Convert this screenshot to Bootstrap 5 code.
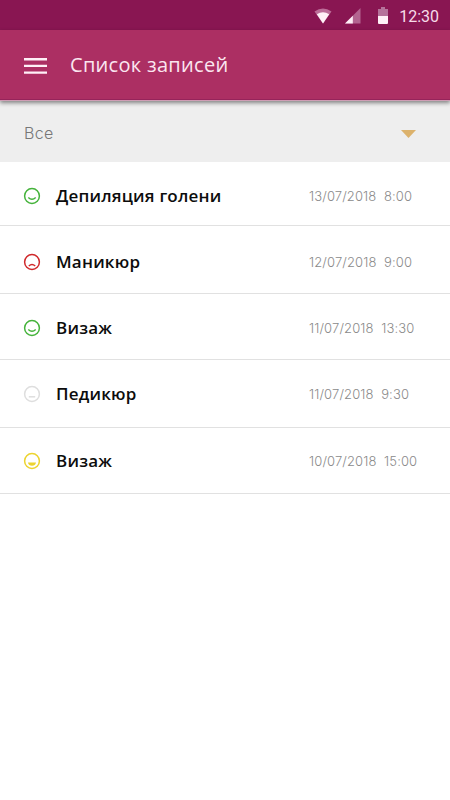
<!DOCTYPE html>
<html lang="ru">
<head>
<meta charset="utf-8">
<meta name="viewport" content="width=device-width, initial-scale=1">
<title>Список записей</title>
<link href="https://cdn.jsdelivr.net/npm/bootstrap@5.3.0/dist/css/bootstrap.min.css" rel="stylesheet">
<style>
body { font-family: "Open Sans", "Noto Sans", sans-serif; background: #fff; }
svg { display: block; flex: none; }
.screen { width: 450px; height: 800px; }
.statusbar { height: 30px; background: #891652; padding-right: 11px; }
.statusbar svg { margin-top: 1px; }
.signal { margin-left: 13px; }
.clock { font: 400 16px/30px Roboto, sans-serif; color: #f6dbe9; margin: 3px 0 0 10px; white-space: nowrap; }
.appbar { height: 71px; background: #ac2f63; border-bottom: 1px solid #cf9db4; box-shadow: inset 0 -1px #96245a, 0 2px 4px rgba(0,0,0,.45); padding: 0 24px; position: relative; }
.appbar svg { margin-top: 2px; }
.appbar h1 { font-size: 20px; line-height: 24px; font-weight: 500; letter-spacing: .3px; color: #fbe6f0; margin: -1px 0 0 23px; }
.filterbar { height: 61px; background: #eee; padding: 4px 34px 0 24px; color: #777; font-size: 16px; }
.filterbar span { font-family: Inter, sans-serif; font-weight: 300; letter-spacing: .3px; margin-top: -2px; }
.entry { border-bottom: 1px solid #e1e1e1; padding-left: 23px; height: 66px; }
.entry.first { height: 64px; padding-top: 4px; }
.entry.tall { height: 68px; padding-top: 4px; }
.entry.level { padding-top: 0; }
.entry.plain { padding-top: 2px; }
.title { font-size: 17px; font-weight: 600; color: #0c0c0c; margin-left: 15px; letter-spacing: .2px; white-space: nowrap; }
.date { width: 141px; font-family: Inter, sans-serif; font-size: 13px; font-weight: 300; letter-spacing: .12px; color: #8a8a8a; white-space: pre; padding-top: 3px; }
</style>
</head>
<body>
<main class="screen overflow-hidden">
  <div class="statusbar d-flex align-items-center justify-content-end">
    <svg width="18" height="16" viewBox="0 0 18 16"><path d="M.5 3.5Q9-2.5 17.5 3.5L9 15.5Z" fill="#bc6d98"/><path d="M2.8 6.3Q9 2.3 15.2 6.3L9 15.5Z" fill="#fff0f7"/></svg>
    <svg class="signal" width="16" height="16" viewBox="0 0 16 16"><path d="M15.5 0V15.5H0Z" fill="#b36490"/><path d="M7.8 7.7V15.5H0Z" fill="#fff0f7"/></svg>
    <svg width="12" height="18" viewBox="0 0 12 18" class="ms-3"><path d="M4 0H8V2H11V9H1V2H4Z" fill="#b5729a"/><path d="M1 9H11V16Q11 17 10 17H2Q1 17 1 16Z" fill="#fff0f7"/></svg>
    <span class="clock">12:30</span>
  </div>
  <header class="appbar d-flex align-items-center">
    <svg width="23" height="16" viewBox="0 0 23 16" fill="#fff0f7"><path d="M0 0H23V2.4H0ZM0 6.7H23V9.1H0ZM0 13.4H23V15.8H0Z"/></svg>
    <h1>Список записей</h1>
  </header>
  <div class="filterbar d-flex align-items-center justify-content-between">
    <span>Все</span>
    <svg width="15" height="8" viewBox="0 0 15 8"><path d="M0 0H15L7.5 8Z" fill="#dcb26c"/></svg>
  </div>
  <div>
    <div class="entry first d-flex align-items-center"><svg width="18" height="18" viewBox="0 0 18 18" fill="none" stroke="#45b33b" stroke-width="1.5"><circle cx="9" cy="9" r="7.4"/><path d="M5.3 10.5Q9 14 12.7 10.5"/></svg><span class="title">Депиляция голени</span><span class="date ms-auto">13/07/2018  8:00</span></div>
    <div class="entry tall d-flex align-items-center"><svg width="18" height="18" viewBox="0 0 18 18" fill="none" stroke="#d0292b" stroke-width="1.5"><circle cx="9" cy="9" r="7.4"/><path d="M5.8 13Q9 10 12.2 13"/></svg><span class="title">Маникюр</span><span class="date ms-auto">12/07/2018  9:00</span></div>
    <div class="entry plain d-flex align-items-center"><svg width="18" height="18" viewBox="0 0 18 18" fill="none" stroke="#45b33b" stroke-width="1.5"><circle cx="9" cy="9" r="7.4"/><path d="M5.3 10.5Q9 14 12.7 10.5"/></svg><span class="title">Визаж</span><span class="date ms-auto">11/07/2018  13:30</span></div>
    <div class="entry tall level d-flex align-items-center"><svg width="18" height="18" viewBox="0 0 18 18" fill="none" stroke="#dedede" stroke-width="1.5"><circle cx="9" cy="9" r="7.4"/><path d="M5.8 11.8H12.2"/></svg><span class="title">Педикюр</span><span class="date ms-auto">11/07/2018  9:30</span></div>
    <div class="entry level d-flex align-items-center"><svg width="18" height="18" viewBox="0 0 18 18" fill="none" stroke="#ecd32f" stroke-width="1.5"><circle cx="9" cy="9" r="7.4"/><path d="M5 10.5H13Q12.4 13.8 9 13.8T5 10.5Z" fill="#ecd32f" stroke="none"/></svg><span class="title">Визаж</span><span class="date ms-auto">10/07/2018  15:00</span></div>
  </div>
</main>
<script src="https://cdn.jsdelivr.net/npm/bootstrap@5.3.0/dist/js/bootstrap.bundle.min.js"></script>
</body>
</html>
